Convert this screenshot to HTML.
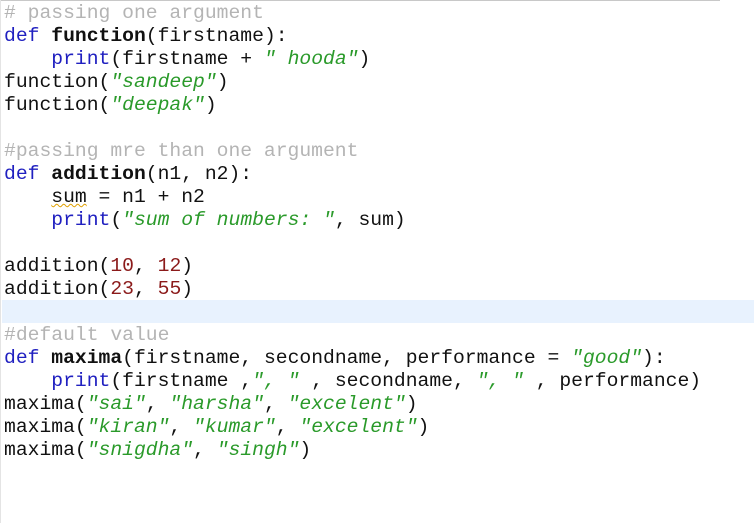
<!DOCTYPE html>
<html><head><style>
html,body{margin:0;padding:0;background:#fff;width:754px;height:523px;overflow:hidden}
.top{position:absolute;left:0;top:0;width:720px;height:1px;background:#c8c8c8}
.lft{position:absolute;left:0;top:0;width:1px;height:523px;background:#e4e4e4}
.hl{position:absolute;left:2px;top:300px;width:752px;height:23px;background:#e8f2fe}
pre{position:absolute;left:4px;top:2px;margin:0;font-family:"Liberation Mono",monospace;font-size:19.7px;line-height:23px;color:#111}
.c{color:#b4b4b4}.k{color:#2020c0}.b{font-weight:bold}.s{color:#2a9a2a;font-style:italic}.n{color:#8b1a1a}
.u{text-decoration:underline wavy #e0a000;text-decoration-thickness:1px}
</style></head><body>
<div class="top"></div><div class="lft"></div><div class="hl"></div>
<pre><span class="c"># passing one argument</span>
<span class="k">def</span> <span class="b">function</span>(firstname):
    <span class="k">print</span>(firstname + <span class="s">" hooda"</span>)
function(<span class="s">"sandeep"</span>)
function(<span class="s">"deepak"</span>)

<span class="c">#passing mre than one argument</span>
<span class="k">def</span> <span class="b">addition</span>(n1, n2):
    <span class="u">sum</span> = n1 + n2
    <span class="k">print</span>(<span class="s">"sum of numbers: "</span>, sum)

addition(<span class="n">10</span>, <span class="n">12</span>)
addition(<span class="n">23</span>, <span class="n">55</span>)

<span class="c">#default value</span>
<span class="k">def</span> <span class="b">maxima</span>(firstname, secondname, performance = <span class="s">"good"</span>):
    <span class="k">print</span>(firstname ,<span class="s">", "</span> , secondname, <span class="s">", "</span> , performance)
maxima(<span class="s">"sai"</span>, <span class="s">"harsha"</span>, <span class="s">"excelent"</span>)
maxima(<span class="s">"kiran"</span>, <span class="s">"kumar"</span>, <span class="s">"excelent"</span>)
maxima(<span class="s">"snigdha"</span>, <span class="s">"singh"</span>)</pre>
</body></html>
